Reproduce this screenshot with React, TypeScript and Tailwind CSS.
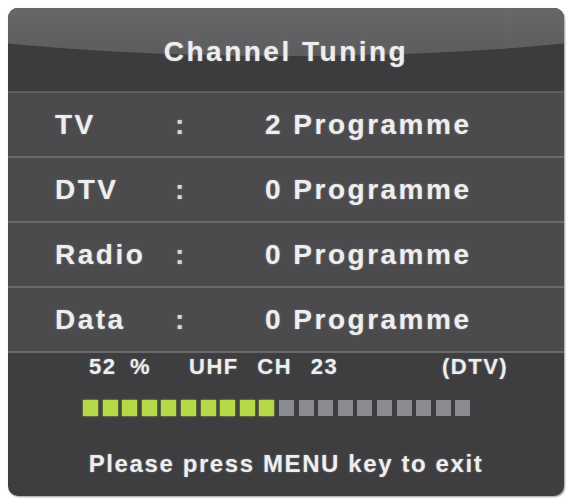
const ROWS = [
  { label: "TV", count: 2 },
  { label: "DTV", count: 0 },
  { label: "Radio", count: 0 },
  { label: "Data", count: 0 },
];

const SEGMENTS = 20;
const PERCENT = 52;

function ProgressBar({ percent }: { percent: number }) {
  const lit = Math.round((SEGMENTS * percent) / 100);
  return (
    <div className="flex gap-[4.6px]">
      {Array.from({ length: SEGMENTS }, (_, i) => (
        <div
          key={i}
          className={
            i < lit
              ? "h-[16px] w-[15px] bg-[#b6d94a] shadow-[0_0_2px_#9bc43a]"
              : "h-[16px] w-[15px] bg-[#8b8b92]"
          }
        />
      ))}
    </div>
  );
}

export default function App() {
  return (
    <div className="h-[501px] w-[570px] bg-white pl-[8px] pt-[8px] font-['Liberation_Sans',Arial,sans-serif] font-bold text-[#eeeeee] [text-shadow:0_0_2px_rgba(255,255,255,0.35)]">
      <div className="flex h-[488px] w-[556px] flex-col overflow-hidden rounded-[10px] bg-[#3e3e40] shadow-[1px_1px_2px_rgba(0,0,0,0.4)]">
        {/* header */}
        <div className="relative flex h-[83px] shrink-0 items-center justify-center overflow-hidden bg-[#3c3c3e]">
          <div className="absolute left-[-172px] top-[-70px] h-[118px] w-[900px] rounded-[50%] bg-gradient-to-b from-[#7a7a7c] to-[#5c5c5e]" />
          <span className="relative pt-[4px] text-[28px] leading-none tracking-[2.5px]">Channel Tuning</span>
        </div>

        {/* channel counts */}
        <div className="flex flex-col border-t-2 border-[#5e5e60]">
          {ROWS.map((row) => (
            <div
              key={row.label}
              className="grid h-[65px] grid-cols-[120px_90px_1fr] items-center border-b-2 border-[#6a6a6c] bg-[#4b4b4d] pl-[47px] text-[28px] leading-none tracking-[2.5px]"
            >
              <span>{row.label}</span>
              <span className="text-[#d8d8d8]">:</span>
              <span>{row.count} Programme</span>
            </div>
          ))}
        </div>

        {/* status */}
        <div className="flex flex-1 flex-col pt-[3px]">
          <div className="grid grid-cols-[100px_253px_auto] pl-[81px] text-[22px] leading-none tracking-[1.5px]">
            <span className="whitespace-pre [word-spacing:6px]">52 %</span>
            <span className="[word-spacing:11px]">UHF CH 23</span>
            <span>(DTV)</span>
          </div>
          <div className="mt-[22px] pl-[75px]">
            <ProgressBar percent={PERCENT} />
          </div>
          <div className="mt-[36px] text-center text-[24px] leading-none tracking-[1.6px]">
            Please press MENU key to exit
          </div>
        </div>
      </div>
    </div>
  );
}
